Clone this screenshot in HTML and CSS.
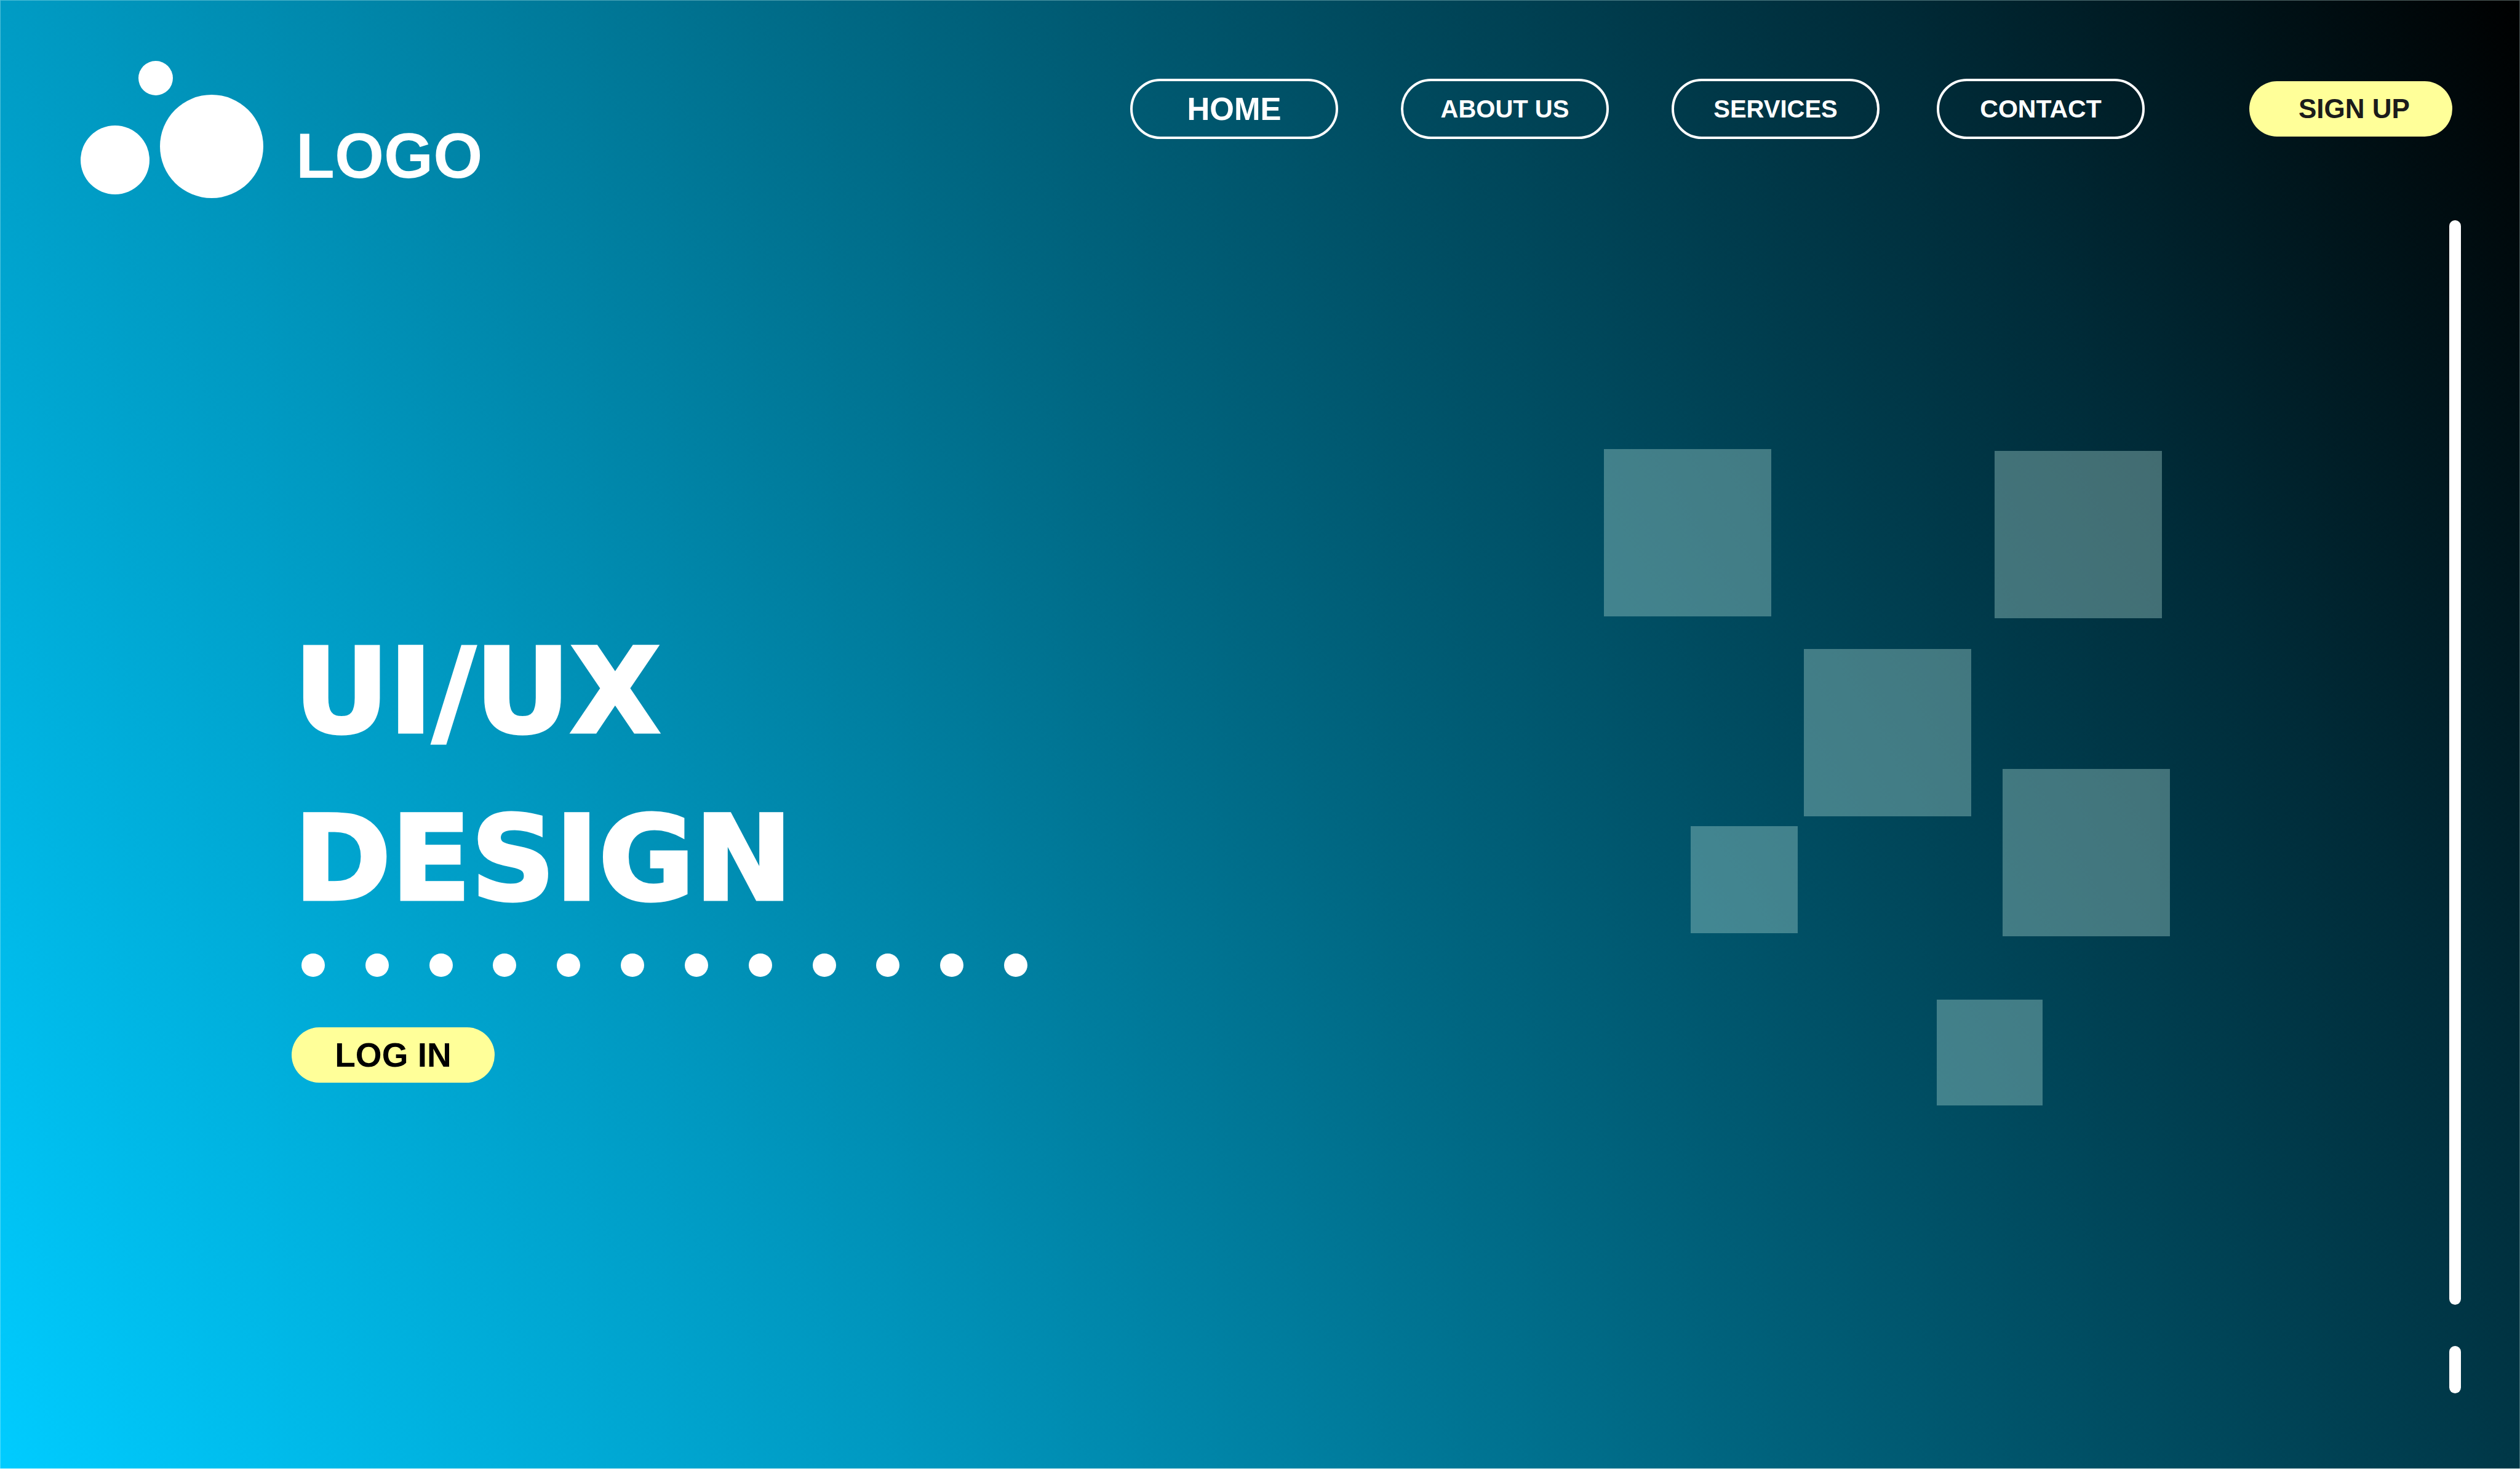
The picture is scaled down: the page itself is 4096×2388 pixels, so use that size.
FILE: index.html
```html
<!DOCTYPE html>
<html lang="en">
<head>
<meta charset="utf-8">
<meta name="viewport" content="width=device-width, initial-scale=1">
<title>UI/UX Design</title>
<link rel="stylesheet" href="styles.css">
</head>
<body>
<div class="page">
  <header class="header">
    <a class="brand" href="#">
      <svg class="brand-mark" viewBox="0 0 298 224" aria-hidden="true">
        <circle cx="122" cy="28" r="28"/>
        <circle cx="56" cy="161" r="56"/>
        <circle cx="213" cy="139" r="84"/>
      </svg>
      <span class="brand-name">LOGO</span>
    </a>
    <nav class="nav">
      <a class="pill pill-current" href="#">HOME</a>
      <a class="pill" href="#">ABOUT US</a>
      <a class="pill" href="#">SERVICES</a>
      <a class="pill pill-last" href="#">CONTACT</a>
    </nav>
    <button class="button button-signup" type="button">SIGN UP</button>
  </header>
  <div class="body">
    <main class="hero">
      <section class="intro">
        <h1 class="title">UI/UX<br>DESIGN</h1>
        <div class="dots" aria-hidden="true">
          <i class="dot"></i><i class="dot"></i><i class="dot"></i><i class="dot"></i><i class="dot"></i><i class="dot"></i><i class="dot"></i><i class="dot"></i><i class="dot"></i><i class="dot"></i><i class="dot"></i><i class="dot"></i>
        </div>
        <button class="button button-login" type="button">LOG IN</button>
      </section>
      <svg class="squares" viewBox="0 0 921 1067" aria-hidden="true">
        <rect x="0" y="0" width="272" height="272"/>
        <rect x="635" y="3" width="272" height="272"/>
        <rect x="325" y="325" width="272" height="272"/>
        <rect x="141" y="613" width="174" height="174"/>
        <rect x="648" y="520" width="272" height="272"/>
        <rect x="541" y="895" width="172" height="172"/>
      </svg>
    </main>
    <div class="rail" aria-hidden="true">
      <span class="rail-track"></span>
      <span class="rail-end"></span>
    </div>
  </div>
</div>
</body>
</html>
```
FILE: styles.css
```css
*,
*::before,
*::after {
  box-sizing: border-box;
}

body {
  margin: 0;
  font-family: "Liberation Sans", Arial, sans-serif;
  font-weight: 700;
  color: #fff;
}

.page {
  display: flex;
  flex-direction: column;
  min-height: 100vh;
  background: linear-gradient(60deg, #00ccff 0%, #0098c0 27%, #006681 51%, #002b38 81%, #000 100%);
  box-shadow: inset 0 -1px rgba(255, 255, 255, 0.7), inset 0 0 0 1px rgba(220, 255, 250, 0.35);
}

.header {
  display: flex;
  align-items: flex-start;
  padding: 99px 110px 0 131px;
}

.brand {
  display: flex;
  align-items: flex-start;
  gap: 52px;
  margin-right: auto;
  color: inherit;
  text-decoration: none;
}

.brand-mark {
  width: 298px;
  height: 224px;
  fill: #fff;
}

.brand-name {
  padding-top: 96px;
  font-size: 103px;
  line-height: 118px;
}

.nav {
  display: flex;
  gap: 102px;
  margin: 29px 170px 0 0;
}

.pill {
  display: flex;
  align-items: center;
  justify-content: center;
  width: 338px;
  height: 98px;
  border: 4px solid #fff;
  border-radius: 50px;
  color: inherit;
  font-size: 40px;
  text-decoration: none;
}

.pill-current {
  font-size: 51px;
}

.pill-last {
  margin-left: -9px;
  font-size: 41px;
}

.button {
  width: 330px;
  height: 90px;
  margin: 0;
  padding: 0;
  border: 0;
  border-radius: 45px;
  background: #ffff99;
  font: inherit;
}

.button-signup {
  margin-top: 33px;
  padding-left: 80px;
  color: #1b1b1b;
  font-size: 44px;
  text-align: left;
}

.button-login {
  color: #000;
  font-size: 55px;
}

.body {
  display: flex;
  flex: 1;
  padding: 35px 96px 123px 474px;
}

.hero {
  display: flex;
  flex: 1;
  align-items: flex-start;
  justify-content: space-between;
  padding: 372px 453px 0 0;
}

.intro {
  padding-top: 259px;
}

.title {
  margin: 0 0 0 4px;
  font-family: "DejaVu Sans", Verdana, sans-serif;
  font-size: 190px;
  font-weight: 700;
  line-height: 272px;
  -webkit-text-stroke: 5px #fff;
}

.dots {
  display: flex;
  justify-content: space-between;
  width: 1180px;
  margin: 17px 0 82px 16px;
}

.dot {
  width: 38px;
  height: 38px;
  border-radius: 50%;
  background: #fff;
}

.squares {
  width: 921px;
  height: 1067px;
  fill: rgba(180, 222, 213, 0.37);
}

.rail {
  display: flex;
  flex-direction: column;
  gap: 67px;
  width: 19px;
}

.rail-track,
.rail-end {
  border-radius: 10px;
  background: #fff;
}

.rail-track {
  flex: 1;
}

.rail-end {
  height: 77px;
}
```
